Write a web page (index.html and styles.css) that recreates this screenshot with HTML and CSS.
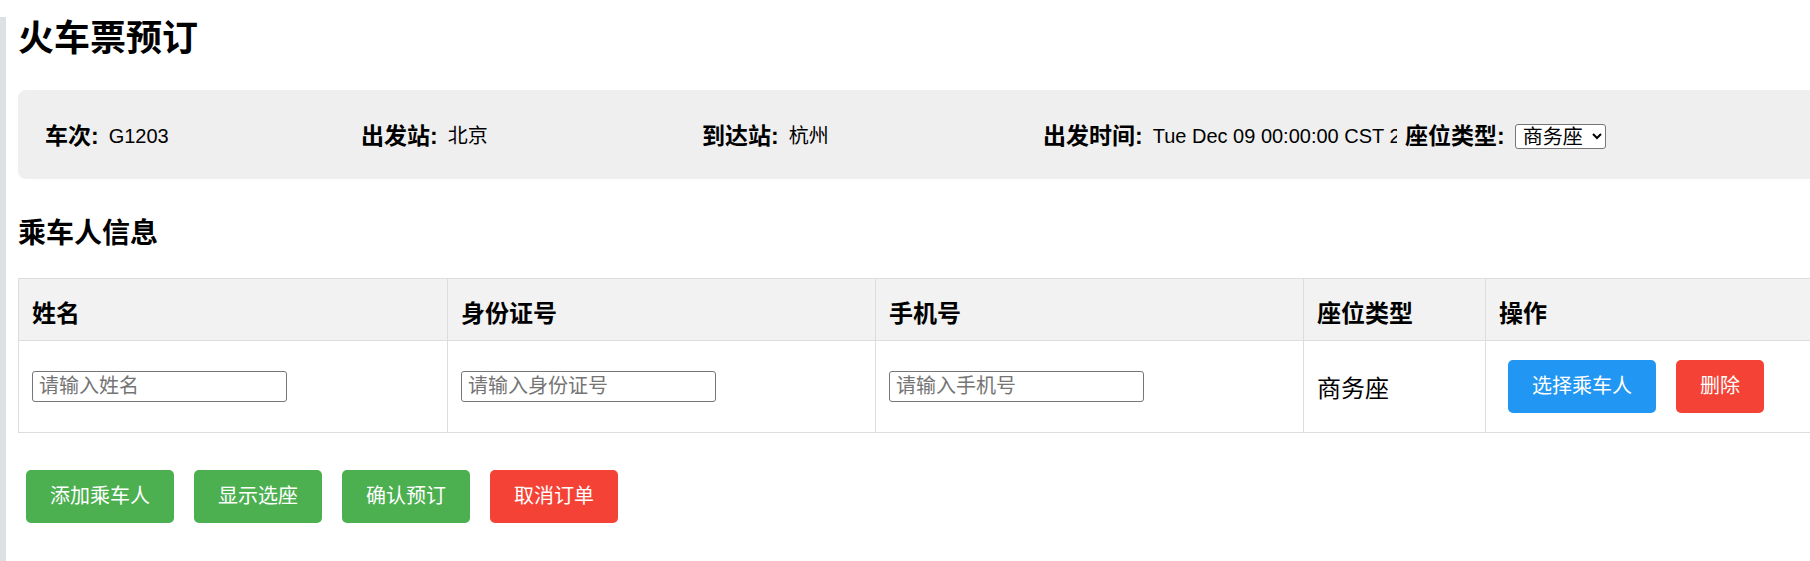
FILE: index.html
```html
<!DOCTYPE html>
<html lang="zh-CN">
<head>
<meta charset="utf-8">
<title>火车票预订</title>
<link rel="stylesheet" href="styles.css">
</head>
<body>
<div class="page">
  <div class="content">
    <h1 class="title">火车票预订</h1>

    <div class="train-info">
      <div class="info-item"><span class="info-label">车次:</span><span class="info-value">G1203</span></div>
      <div class="info-item"><span class="info-label">出发站:</span><span class="info-value">北京</span></div>
      <div class="info-item"><span class="info-label">到达站:</span><span class="info-value">杭州</span></div>
      <div class="info-item"><span class="info-label">出发时间:</span><span class="info-value">Tue Dec 09 00:00:00 CST 2025</span></div>
      <div class="info-item"><span class="info-label">座位类型:</span>
        <select class="seat-select">
          <option>商务座</option>
          <option>一等座</option>
          <option>二等座</option>
        </select>
      </div>
    </div>

    <h2 class="section-title">乘车人信息</h2>

    <table class="passenger-table">
      <colgroup>
        <col class="col-name">
        <col class="col-id">
        <col class="col-phone">
        <col class="col-seat">
        <col class="col-ops">
      </colgroup>
      <thead>
        <tr>
          <th>姓名</th>
          <th>身份证号</th>
          <th>手机号</th>
          <th>座位类型</th>
          <th>操作</th>
        </tr>
      </thead>
      <tbody>
        <tr>
          <td class="input-cell"><input class="text-input" type="text" placeholder="请输入姓名"></td>
          <td class="input-cell"><input class="text-input" type="text" placeholder="请输入身份证号"></td>
          <td class="input-cell"><input class="text-input" type="text" placeholder="请输入手机号"></td>
          <td class="seat-cell">商务座</td>
          <td class="ops-cell">
            <div class="actions">
              <button class="btn btn-blue" type="button">选择乘车人</button>
              <button class="btn btn-red" type="button">删除</button>
            </div>
          </td>
        </tr>
      </tbody>
    </table>

    <div class="footer-actions">
      <button class="btn btn-green" type="button">添加乘车人</button>
      <button class="btn btn-green" type="button">显示选座</button>
      <button class="btn btn-green" type="button">确认预订</button>
      <button class="btn btn-red" type="button">取消订单</button>
    </div>
  </div>
</div>
</body>
</html>
```

FILE: styles.css
```css
html, body {
  margin: 0;
  padding: 0;
  background: #ffffff;
  overflow: hidden;
}

body {
  font-family: "Liberation Sans", "Noto Sans CJK SC", sans-serif;
  color: #000000;
}

.page {
  min-height: 100vh;
  border-left: 6px solid #dde1e6;
  padding-left: 12px;
  box-sizing: border-box;
}

.content {
  width: 1895px;
}

.title {
  font-size: 36px;
  font-weight: bold;
  line-height: 44px;
  margin: 17px 0 29px;
}

.train-info {
  display: grid;
  grid-template-columns: 308px 333px 333px 354px 1fr;
  column-gap: 8px;
  align-items: center;
  background: #efefef;
  border-radius: 8px;
  padding: 30px 0 27px 27px;
  height: 32px;
}

.info-item {
  display: flex;
  align-items: center;
  white-space: nowrap;
  overflow: hidden;
  line-height: 32px;
}

.info-label {
  font-size: 23px;
  font-weight: bold;
  margin-right: 10px;
}

.info-value {
  font-size: 20px;
}

.seat-select {
  font-family: "Liberation Sans", "Noto Sans CJK SC", sans-serif;
  font-size: 20px;
  width: 91px;
  height: 25px;
  padding: 0 0 0 3px;
  border: 1px solid #767676;
  border-radius: 3px;
  background: #ffffff;
  color: #000000;
}

.section-title {
  font-size: 28px;
  font-weight: bold;
  line-height: 36px;
  margin: 37px 0 26px;
}

.passenger-table {
  width: 1895px;
  border-collapse: collapse;
  table-layout: fixed;
}

.col-name { width: 429px; }
.col-id { width: 428px; }
.col-phone { width: 428px; }
.col-seat { width: 182px; }

.passenger-table th,
.passenger-table td {
  border: 1px solid #dddddd;
  text-align: left;
  vertical-align: middle;
  padding: 0 13px;
}

.passenger-table th {
  background: #f2f2f2;
  font-size: 24px;
  font-weight: bold;
  height: 58px;
  padding-top: 3px;
}

.passenger-table td {
  height: 91px;
  font-size: 24px;
}

.input-cell,
.seat-cell {
  padding-top: 6px;
}

.text-input {
  display: block;
  box-sizing: border-box;
  width: 255px;
  height: 31px;
  margin: 0;
  padding: 0 6px;
  font-family: "Liberation Sans", "Noto Sans CJK SC", sans-serif;
  font-size: 20px;
  border: 1px solid #767676;
  border-radius: 3px;
  background: #ffffff;
}

.text-input::placeholder {
  color: #757575;
}

.actions {
  display: flex;
  gap: 20px;
  margin-left: 9px;
}

.btn {
  height: 53px;
  padding: 0 24px;
  border: none;
  border-radius: 5px;
  color: #ffffff;
  font-family: "Liberation Sans", "Noto Sans CJK SC", sans-serif;
  font-size: 20px;
  line-height: 53px;
  cursor: pointer;
}

.btn-blue { background: #2196f3; }
.btn-red { background: #f44336; }
.btn-green { background: #4caf50; }

.footer-actions {
  display: flex;
  gap: 20px;
  margin: 37px 0 0 8px;
}
```
